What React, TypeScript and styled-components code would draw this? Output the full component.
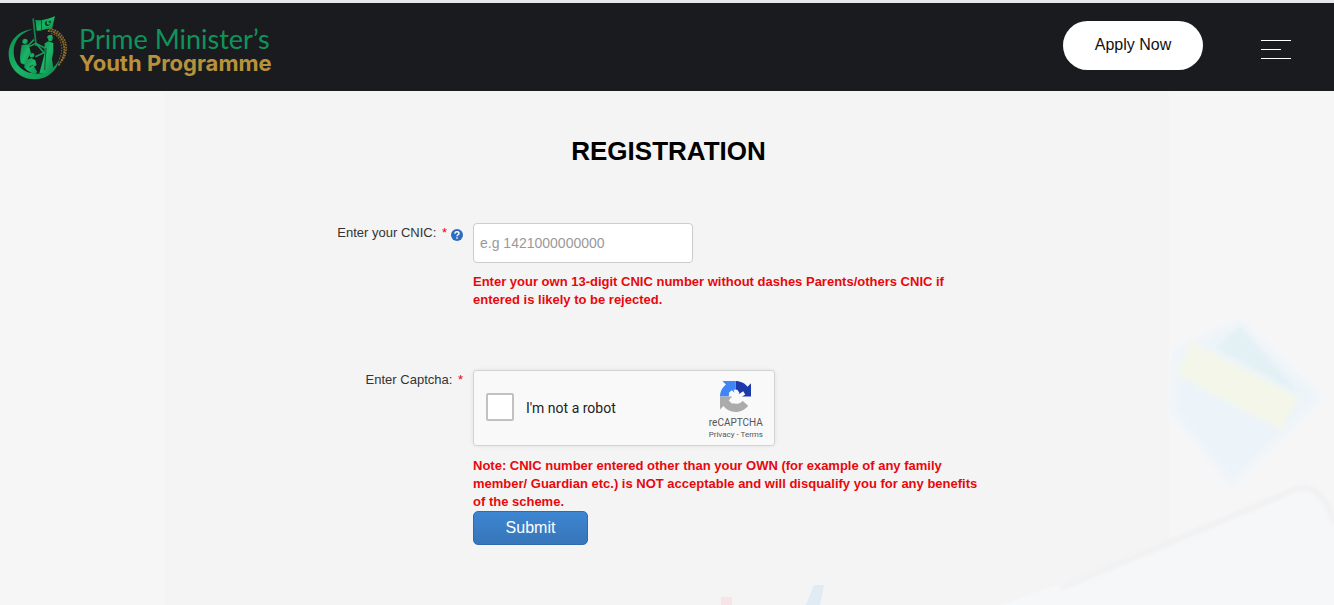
import React from "react";
import styled, { createGlobalStyle } from "styled-components";

const GlobalStyle = createGlobalStyle`
  *, *::before, *::after { box-sizing: border-box; }
  body {
    margin: 0;
    background: #f6f6f7;
    color: #333;
    font-family: "Liberation Sans", Arial, sans-serif;
    font-size: 13px;
    line-height: 18px;
  }
`;

const Page = styled.div`
  display: flex;
  flex-direction: column;
  min-height: 100vh;
  border-top: 3px solid #e6e8ee;
`;

const Header = styled.header`
  display: flex;
  align-items: center;
  justify-content: space-between;
  min-height: 88px;
  padding: 0 43px 0 8px;
  background: #1a1b1e;
`;

const Brand = styled.a`
  display: flex;
  align-items: center;
  gap: 11px;
  text-decoration: none;
`;

const BrandText = styled.span`
  display: flex;
  flex-direction: column;
  padding-top: 8px;
  white-space: nowrap;
`;

const BrandTop = styled.span`
  color: #10935a;
  font: 400 27px/24px Lato, sans-serif;
`;

const BrandBottom = styled.span`
  color: #b8923a;
  font: 700 22px/24px Inter, sans-serif;
`;

const HeaderActions = styled.div`
  display: flex;
  align-items: center;
  gap: 58px;
`;

const ApplyButton = styled.button`
  width: 140px;
  height: 49px;
  margin-bottom: 4px;
  border: 0;
  border-radius: 25px;
  background: #fff;
  color: #111;
  font: 16px/24px "Liberation Sans", Arial, sans-serif;
`;

const MenuButton = styled.button`
  display: flex;
  flex-direction: column;
  gap: 8px;
  width: 30px;
  padding: 4px 0 0;
  border: 0;
  background: none;
`;

const MenuLine = styled.span<{ $short?: boolean }>`
  width: ${(p) => (p.$short ? "20px" : "30px")};
  height: 1px;
  background: #fff;
`;

const Main = styled.main`
  position: relative;
  flex: 1;
  display: flex;
  justify-content: center;
  overflow: hidden;
`;

const Backdrop = styled.svg`
  position: absolute;
  right: 0;
  bottom: 0;
`;

const Panel = styled.form`
  flex: 0 1 1004px;
  padding: 45px 0 40px;
  background: #f4f4f4;
`;

const Content = styled.div`
  position: relative;
`;

const Title = styled.h1`
  margin: 0 0 56px;
  padding-left: 3px;
  color: #000;
  font-size: 26px;
  line-height: 31px;
  text-align: center;
`;

const Row = styled.div`
  display: grid;
  grid-template-columns: 298px minmax(0, 512px);
  column-gap: 10px;
  & + & { margin-top: 61px; }
`;

const LabelCell = styled.div`
  display: flex;
  justify-content: flex-end;
  align-items: flex-start;
  gap: 4px;
  padding-top: 1px;
`;

const Label = styled.label`
  color: #333;
`;

const Required = styled.span`
  color: #e00;
  margin-left: 2px;
`;

const HelpIcon = styled.svg`
  display: block;
  margin-top: 5px;
`;

const Field = styled.div`
  display: flex;
  flex-direction: column;
  align-items: flex-start;
`;

const TextInput = styled.input`
  width: 220px;
  height: 40px;
  padding: 0 6px;
  border: 1px solid #ccc;
  border-radius: 4px;
  background: #fff;
  font: 14px/20px "Liberation Sans", Arial, sans-serif;
  &::placeholder { color: #999; opacity: 1; }
`;

const Warning = styled.p`
  margin: 10px 0 0;
  color: #e8080c;
  font-weight: 700;
`;

const Captcha = styled.div`
  display: flex;
  align-items: center;
  width: 302px;
  height: 76px;
  margin-bottom: 1px;
  padding: 0 11px 0 12px;
  border: 1px solid #d3d3d3;
  border-radius: 3px;
  background: #f9f9f9;
  box-shadow: 0 0 4px rgba(0, 0, 0, 0.08);
  font-family: Roboto, sans-serif;
`;

const CaptchaCheck = styled.input`
  appearance: none;
  width: 28px;
  height: 28px;
  margin: 0 12px 2px 0;
  border: 2px solid #c1c1c1;
  border-radius: 2px;
  background: #fff;
`;

const CaptchaLabel = styled.label`
  flex: 1;
  color: #222;
  font-size: 14px;
`;

const CaptchaBrand = styled.div`
  display: flex;
  flex-direction: column;
  align-items: center;
  padding-top: 5px;
  color: #555;
`;

const CaptchaName = styled.span`
  font-size: 10px;
  line-height: 12px;
  margin-top: 5px;
`;

const CaptchaLinks = styled.span`
  font-size: 8px;
  line-height: 12px;
  a { color: inherit; text-decoration: none; }
`;

const SubmitButton = styled.button`
  width: 115px;
  height: 34px;
  border: 1px solid #2f6cae;
  border-radius: 5px;
  background: linear-gradient(#3d86d2, #3776b8);
  color: #fff;
  font: 16px/20px "Liberation Sans", Arial, sans-serif;
`;

const Emblem = () => (
  <svg width="60" height="66" viewBox="24 20 180 198" aria-hidden="true">
    <defs>
      <linearGradient id="green" x1="0" y1="0" x2="1" y2="1">
        <stop offset="0" stopColor="#0c8a4c" />
        <stop offset=".5" stopColor="#1bb565" />
        <stop offset="1" stopColor="#0f8a50" />
      </linearGradient>
    </defs>
    <path
      d="M98 66C55 69 26 101 26 141c0 42 34 75 76 75 39 0 69-25 77-62-13 28-37 45-67 45-41 0-71-27-71-66 0-32 20-57 57-67z"
      fill="url(#green)"
    />
    <path d="M97 34l5-1 9 83-5 1z" fill="#16844d" />
    <path d="M106 37c20 6 36-3 59-10l-9 38c-18-4-28 7-46 5z" fill="url(#green)" />
    <path d="M124 36l1 34" stroke="#1a1b1e" strokeWidth="2" />
    <path d="M143 40c-9 0-12 12-4 15 5 2 10-1 11-6-3 4-9 4-10-1 0-4 1-6 3-8zM150 38l1 4 4 0-3 3 1 4-4-3-3 2 1-4-3-2 4-1z" fill="#103d2a" />
    <path d="M66 128L108 108L144 127M80 119l22-22M108 108l24 28-26 12" fill="none" stroke="#189a58" strokeWidth="5" />
    <g fill="url(#green)">
      <circle cx="75" cy="102" r="8" />
      <path d="M65 113l17-2 7 12 4 14-10 18-3 20-18-8-2-14 2-22z" />
      <circle cx="151" cy="95" r="7" />
      <path d="M141 89l5-6 10 0 2 6 3 4-19 0z" />
      <path d="M134 108l11-6 15 5 0 26-4 22 5 36-18 7-25 0 9-34 6-24z" />
      <circle cx="96" cy="144" r="7" />
      <path d="M80 157l14-5 12 7 4 14-8 5 10 16-8 8-24-14-8-9 6-14z" />
    </g>
    <path d="M87 180l12-7M138 122l-4 66" fill="none" stroke="#1a1b1e" strokeWidth="2" />
    <g fill="none" strokeLinecap="round" strokeDasharray="1 7">
      <path d="M146 71c22 0 41 19 45 40 5 22 0 40-14 61" stroke="#8d6c2c" strokeWidth="6" />
      <path d="M150 65c23 2 42 22 47 43 4 20 0 38-12 54" stroke="#94712e" strokeWidth="5" />
      <path d="M155 79c17 3 27 18 29 34 3 20-1 33-8 46" stroke="#7b5d25" strokeWidth="4" />
    </g>
  </svg>
);

const CaptchaLogo = () => (
  <svg width="31" height="31" viewBox="0 0 64 64" aria-hidden="true">
    <path d="M64 32V4.600l-7.200 7.200C51 4.600 42 0 32 0v17.800c3 1 6 3 8 6.400l-9 8z" fill="#1c3aa9" />
    <path d="M32 0H5l7.200 7.200C5 13 0 22 0 32h18c0-6 3-10 8-11l6 11z" fill="#4285f4" />
    <path d="M0 32v27l7.200-7.200C13 59 22 64 32 64c11 0 20-5 26-13L46 40c-3 4-7 7-13 7-8 0-11-3-12-6l9-9z" fill="#ababab" />
    <path d="M28 18l8 0 3 9 9-6 4 7-9 6 5 6-7 6-8-4-8 5-7-7 7-8-7-7 6-6 6 5z" fill="#f9f9f9" />
  </svg>
);

const DeskScene = () => (
  <Backdrop width="700" height="514" viewBox="634 91 700 514" aria-hidden="true">
    <defs>
      <filter id="soft" x="-20%" y="-20%" width="140%" height="140%">
        <feGaussianBlur stdDeviation="5" />
      </filter>
      <filter id="edge" x="-20%" y="-20%" width="140%" height="140%">
        <feGaussianBlur stdDeviation="2" />
      </filter>
    </defs>
    <path d="M1240 320l82 78-90 88-62-76 4-60z" fill="#edf4f9" filter="url(#soft)" />
    <path d="M1240 326l60 68-84-46z" fill="#e3f1f4" filter="url(#edge)" />
    <path d="M1191 341l108 57-18 32-104-56z" fill="#f3f6e9" filter="url(#edge)" />
    <path d="M1000 605l134-47 160-68q20-8 34 16l6 18v81z" fill="#f6f7f9" />
    <path d="M1060 588l74-30 160-68q20-8 34 16l6 18" fill="none" stroke="#f0f0f1" strokeWidth="5" filter="url(#edge)" />
    <path d="M721 597h11v8h-11z" fill="#f6e4e8" />
    <path d="M806 605l8-20h10l-4 20z" fill="#e0ebf3" />
  </Backdrop>
);

export default function App() {
  return (
    <Page>
      <GlobalStyle />
      <Header>
        <Brand href="#">
          <Emblem />
          <BrandText>
            <BrandTop>Prime Minister’s</BrandTop>
            <BrandBottom>Youth Programme</BrandBottom>
          </BrandText>
        </Brand>
        <HeaderActions>
          <ApplyButton type="button">Apply Now</ApplyButton>
          <MenuButton type="button" aria-label="Menu">
            <MenuLine />
            <MenuLine $short />
            <MenuLine />
          </MenuButton>
        </HeaderActions>
      </Header>
      <Main>
        <Panel onSubmit={(e) => e.preventDefault()}>
          <DeskScene />
          <Content>
            <Title>REGISTRATION</Title>
            <Row>
              <LabelCell>
                <Label htmlFor="cnic">
                  Enter your CNIC: <Required>*</Required>
                </Label>
                <HelpIcon width="12" height="12" viewBox="0 0 12 12" aria-hidden="true">
                  <circle cx="6" cy="6" r="6" fill="#2f6cc0" />
                  <path d="M4 4.700q0-2 2-2t2 1.700c0 1.400-2 1.300-2 2.800M6 8.200v1.500" fill="none" stroke="#fff" strokeWidth="1.400" />
                </HelpIcon>
              </LabelCell>
              <Field>
                <TextInput id="cnic" type="text" placeholder="e.g 1421000000000" />
                <Warning>
                  Enter your own 13-digit CNIC number without dashes Parents/others CNIC if entered is likely to be
                  rejected.
                </Warning>
              </Field>
            </Row>
            <Row>
              <LabelCell>
                <Label htmlFor="robot">
                  Enter Captcha: <Required>*</Required>
                </Label>
              </LabelCell>
              <Field>
                <Captcha>
                  <CaptchaCheck id="robot" type="checkbox" />
                  <CaptchaLabel htmlFor="robot">I'm not a robot</CaptchaLabel>
                  <CaptchaBrand>
                    <CaptchaLogo />
                    <CaptchaName>reCAPTCHA</CaptchaName>
                    <CaptchaLinks>
                      <a href="#">Privacy</a> - <a href="#">Terms</a>
                    </CaptchaLinks>
                  </CaptchaBrand>
                </Captcha>
                <Warning>
                  Note: CNIC number entered other than your OWN (for example of any family member/ Guardian etc.) is
                  NOT acceptable and will disqualify you for any benefits of the scheme.
                </Warning>
                <SubmitButton type="submit">Submit</SubmitButton>
              </Field>
            </Row>
          </Content>
        </Panel>
      </Main>
    </Page>
  );
}
